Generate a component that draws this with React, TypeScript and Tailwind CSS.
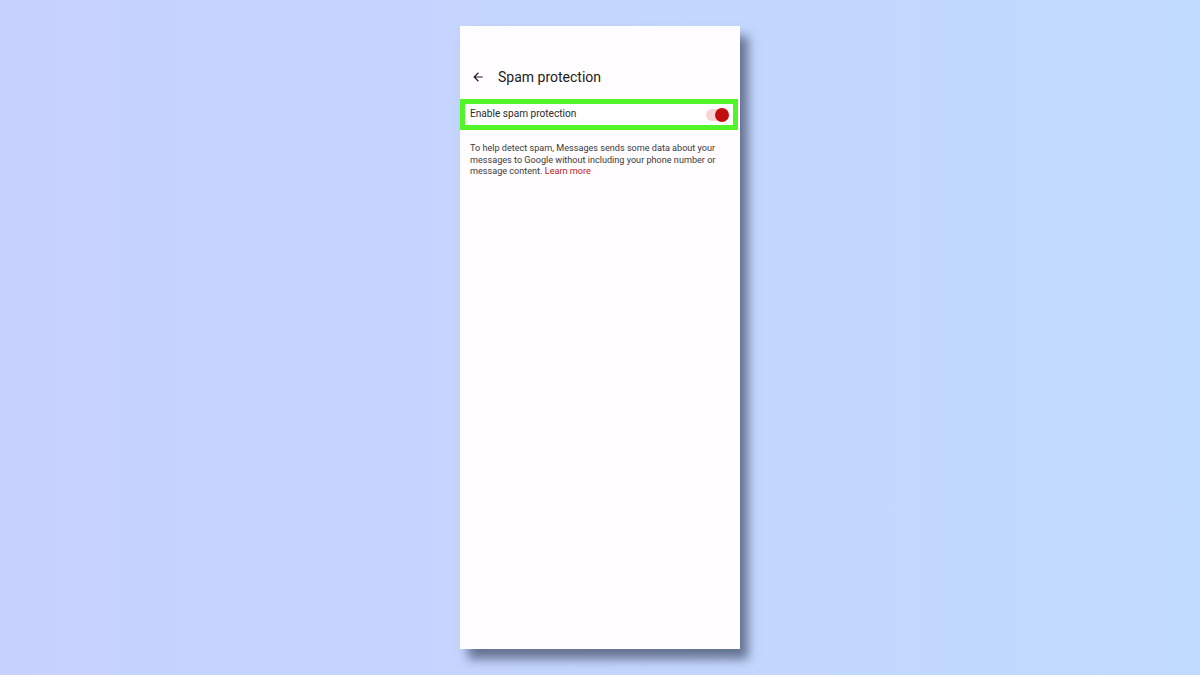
export default function App() {
  return (
    <div
      className="w-[1200px] h-[675px] bg-gradient-to-r from-[#c7d1fe] to-[#c1dbfe] flex justify-center pt-[26px] overflow-hidden"
      style={{ fontFamily: "Roboto, 'Noto Sans', sans-serif" }}
    >
      {/* phone screen */}
      <div className="w-[280px] h-[623px] bg-[#fffdff] shadow-[8px_10px_10px_rgba(70,80,110,0.75)] flex flex-col">
        <div className="h-[40px]" />
        <div className="flex items-center h-[22px] pl-[11px]">
          <svg width="14" height="14" viewBox="0 0 24 24" className="text-[#1d1b20]">
            <path
              d="M20 11H7.83l5.59-5.59L12 4l-8 8 8 8 1.41-1.41L7.83 13H20v-2z"
              fill="currentColor"
            />
          </svg>
          <span className="ml-[13px] text-[14px] text-[#1d1b20] leading-none">Spam protection</span>
        </div>
        <div className="h-[11px]" />
        {/* highlighted toggle row */}
        <div className="mr-[2px] border-[5px] border-[#52f52a] bg-white h-[31px] flex items-center justify-between pl-[5px] pr-[5px]">
          <span className="text-[10.1px] text-[#2a2a2e] leading-none">Enable spam protection</span>
          <div className="relative w-[22px] h-[12px] rounded-full bg-[#f6d4d4]">
            <div className="absolute right-[-1px] top-[-1px] w-[14px] h-[14px] rounded-full bg-[#c00d0d]" />
          </div>
        </div>
        <p className="mt-[13px] pl-[10px] pr-[8px] text-[9.1px] leading-[11.6px] text-[#3a3a3e]">
          To help detect spam, Messages sends some data about your messages to Google without including your phone number or message content.{" "}
          <span className="text-[#c02020]">Learn more</span>
        </p>
      </div>
    </div>
  );
}
